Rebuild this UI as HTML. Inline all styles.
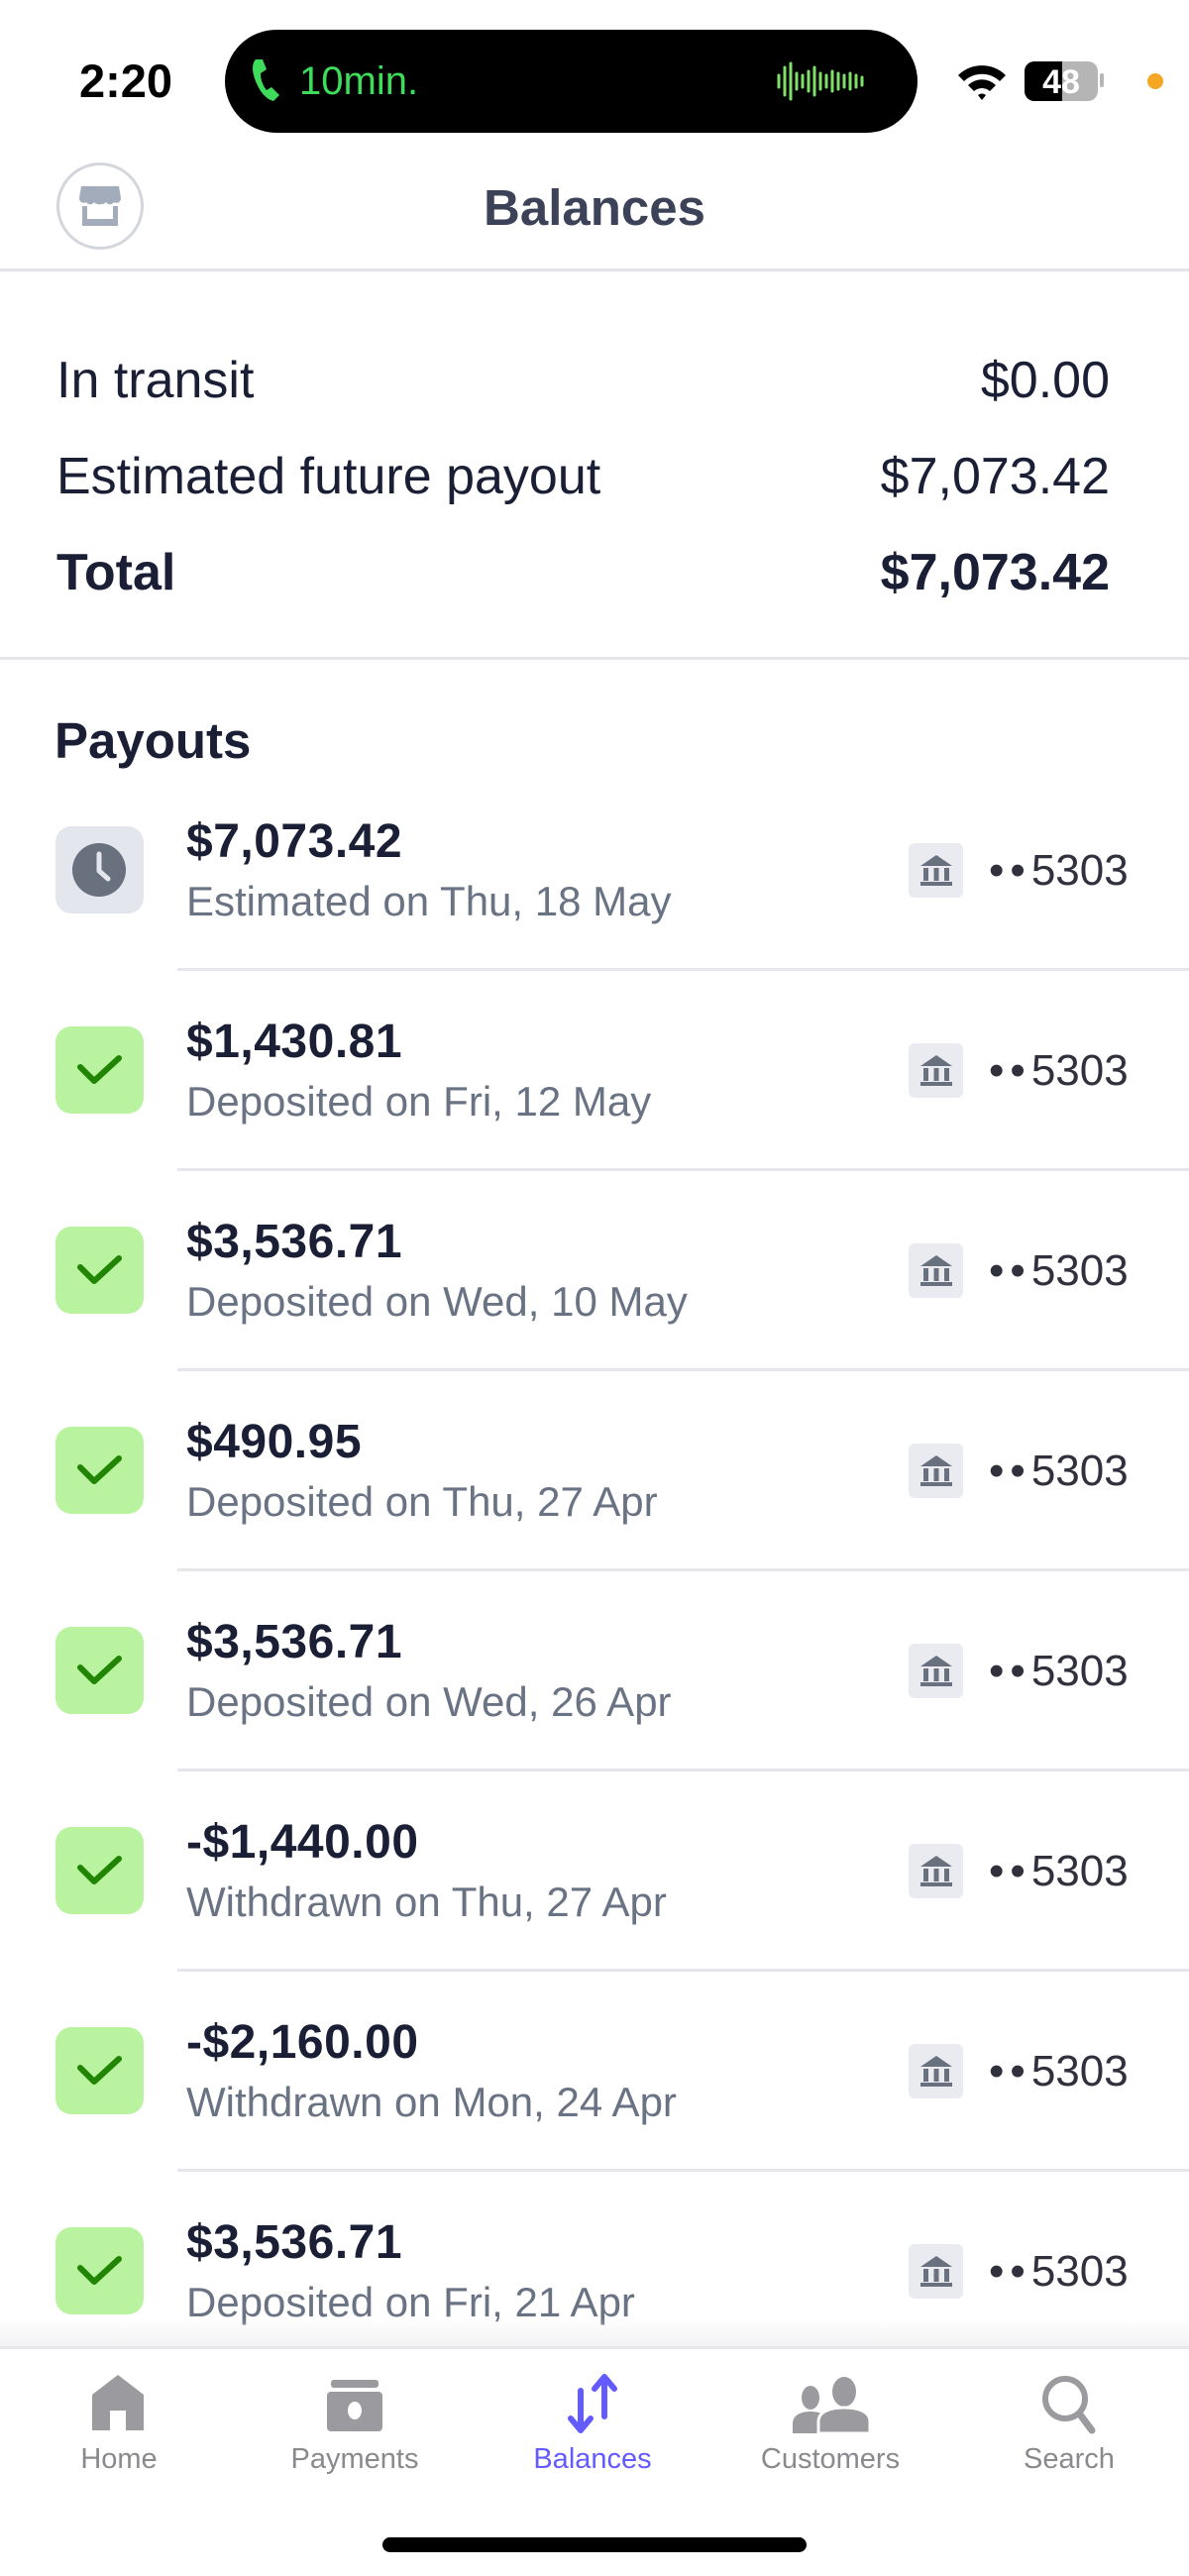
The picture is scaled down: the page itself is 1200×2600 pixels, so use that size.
<!DOCTYPE html>
<html><head><meta charset="utf-8"><style>
*{margin:0;padding:0;box-sizing:border-box}
body{width:1200px;height:2600px;background:#fff;position:relative;overflow:hidden;font-family:"Liberation Sans",sans-serif;color:#1a1f36}
.a{position:absolute}
.lbl{font-size:52px;color:#1a1f36;line-height:1}
.amt{font-size:48px;font-weight:bold;color:#1a1f36;line-height:1;letter-spacing:0.5px}
.sub{font-size:42px;color:#6a7383;line-height:1}
.ib{position:absolute;left:56px;width:89px;height:88px;border-radius:16px}
.bank{position:absolute;left:917px;width:55px;height:55px;background:#e9ebf1;border-radius:6px}
.acct{position:absolute;left:998px;font-size:44px;color:#30313d;line-height:1}
.acct b{font-weight:normal;letter-spacing:6px}
.sep{position:absolute;left:179px;right:0;height:3px;background:#e6e7eb}
.tab{position:absolute;top:2466px;width:240px;text-align:center;font-size:29px;color:#8a8a8e}
</style></head><body>
<div class="a" style="left:80px;top:54px;font-size:47px;font-weight:bold;color:#000">2:20</div>
<div class="a" style="left:227px;top:30px;width:699px;height:104px;background:#000;border-radius:52px"></div>
<svg class="a" style="left:252px;top:58px" width="34" height="46" viewBox="0 0 34 46"><path d="M6 2 C2 6 2 14 6 24 C10 34 16 42 24 44 L30 38 L22 30 L17 33 C13 28 11 22 11 16 L17 12 L13 2 Z" fill="#3ddc5a"/></svg>
<div class="a" style="left:302px;top:60px;font-size:40px;color:#3ddc5a">10min.</div>
<svg class="a" style="left:783px;top:62px" width="110" height="40"><g stroke="#7ee06a" stroke-width="3" stroke-linecap="round">
<line x1="3" y1="14" x2="3" y2="26"/><line x1="9" y1="6" x2="9" y2="34"/><line x1="15" y1="2" x2="15" y2="38"/><line x1="21" y1="12" x2="21" y2="28"/><line x1="27" y1="14" x2="27" y2="26"/><line x1="33" y1="10" x2="33" y2="30"/><line x1="39" y1="6" x2="39" y2="34"/><line x1="45" y1="12" x2="45" y2="28"/><line x1="51" y1="14" x2="51" y2="26"/><line x1="57" y1="10" x2="57" y2="30"/><line x1="63" y1="12" x2="63" y2="28"/><line x1="69" y1="14" x2="69" y2="26"/><line x1="75" y1="12" x2="75" y2="28"/><line x1="81" y1="14" x2="81" y2="26"/><line x1="87" y1="16" x2="87" y2="24"/></g></svg>
<svg class="a" style="left:965px;top:62px" width="52" height="40" viewBox="0 0 52 40"><path d="M2 14 A34 34 0 0 1 50 14 L44 20 A26 26 0 0 0 8 20 Z M12 24 A20 20 0 0 1 40 24 L34 30 A12 12 0 0 0 18 30 Z M22 34 A6 6 0 0 1 30 34 L26 39 Z" fill="#000"/></svg>
<div class="a" style="left:1034px;top:62px;width:74px;height:40px;border-radius:10px;background:#b5b5b5;overflow:hidden"><div style="width:38px;height:40px;background:#000"></div><div class="a" style="left:0;top:2px;width:74px;text-align:center;font-size:34px;font-weight:bold;color:#fff">48</div></div>
<div class="a" style="left:1110px;top:74px;width:4px;height:14px;background:#b5b5b5;border-radius:2px"></div>
<div class="a" style="left:1158px;top:74px;width:16px;height:16px;background:#f5a623;border-radius:50%"></div>
<div class="a" style="left:57px;top:164px;width:88px;height:88px;border:3px solid #d3d6dc;border-radius:50%"></div>
<svg class="a" style="left:76px;top:184px" width="50" height="50" viewBox="0 0 50 50"><path d="M6 4 H44 L46 16 C46 20 42 22 39 20 C37 23 33 23 31 20 C29 23 21 23 19 20 C17 23 13 23 11 20 C8 22 4 20 4 16 Z" fill="#a3acba"/><path d="M7 24 V44 H43 V24 H38 V37 H12 V24 Z" fill="#a3acba"/></svg>
<div class="a" style="left:0;top:180px;width:1200px;text-align:center;font-size:51px;font-weight:bold;color:#3c4257">Balances</div>
<div class="a" style="left:0;top:271px;width:1200px;height:3px;background:#e3e4e8"></div>
<div class="a lbl" style="left:57px;top:358px">In transit</div>
<div class="a lbl" style="right:80px;top:358px">$0.00</div>
<div class="a lbl" style="left:57px;top:455px">Estimated future payout</div>
<div class="a lbl" style="right:80px;top:455px">$7,073.42</div>
<div class="a lbl" style="left:57px;top:552px;font-weight:bold">Total</div>
<div class="a lbl" style="right:80px;top:552px;font-weight:bold">$7,073.42</div>
<div class="a" style="left:0;top:663px;width:1200px;height:3px;background:#e3e4e8"></div>
<div class="a" style="left:55px;top:718px;font-size:51px;font-weight:bold;color:#1a1f36">Payouts</div>

<div id="rows"></div>
<div class="ib" style="top:834px;background:#e3e6ec"></div>
<svg class="a" style="left:70px;top:848px" width="60" height="60" viewBox="0 0 60 60"><circle cx="30" cy="30" r="27" fill="#69707e"/><path d="M30 14 V31 L39 39" stroke="#e3e6ec" stroke-width="5" fill="none" stroke-linecap="round" stroke-linejoin="round"/></svg>
<div class="a amt" style="left:188px;top:826px">$7,073.42</div>
<div class="a sub" style="left:188px;top:889px">Estimated on Thu, 18 May</div>
<div class="bank" style="top:851px"></div>
<svg class="a" style="left:925px;top:859px" width="40" height="40" viewBox="0 0 40 40"><path d="M20 4 L36 15 H4 Z" fill="#69707e"/><rect x="7" y="17" width="5" height="13" fill="#69707e"/><rect x="17.5" y="17" width="5" height="13" fill="#69707e"/><rect x="28" y="17" width="5" height="13" fill="#69707e"/><rect x="4" y="31" width="32" height="4" fill="#69707e"/></svg>
<div class="acct" style="top:857px"><b>••</b>5303</div>
<div class="sep" style="top:977px"></div>

<script>
var d=[["$1,430.81","Deposited on Fri, 12 May"],["$3,536.71","Deposited on Wed, 10 May"],["$490.95","Deposited on Thu, 27 Apr"],["$3,536.71","Deposited on Wed, 26 Apr"],["-$1,440.00","Withdrawn on Thu, 27 Apr"],["-$2,160.00","Withdrawn on Mon, 24 Apr"],["$3,536.71","Deposited on Fri, 21 Apr"]];
var h="";
for(var i=0;i<d.length;i++){var o=202*(i+1);
h+='<div class="ib" style="top:'+(834+o)+'px;background:#b9f3a0"></div>';
h+='<svg class="a" style="left:70px;top:'+(848+o)+'px" width="60" height="60" viewBox="0 0 60 60"><path d="M11 27 L25 41 L50 18" stroke="#228403" stroke-width="6" fill="none" stroke-linecap="round" stroke-linejoin="round"/></svg>';
h+='<div class="a amt" style="left:188px;top:'+(826+o)+'px">'+d[i][0]+'</div>';
h+='<div class="a sub" style="left:188px;top:'+(889+o)+'px">'+d[i][1]+'</div>';
h+='<div class="bank" style="top:'+(851+o)+'px"></div>';
h+='<svg class="a" style="left:925px;top:'+(859+o)+'px" width="40" height="40" viewBox="0 0 40 40"><path d="M20 4 L36 15 H4 Z" fill="#69707e"/><rect x="7" y="17" width="5" height="13" fill="#69707e"/><rect x="17.5" y="17" width="5" height="13" fill="#69707e"/><rect x="28" y="17" width="5" height="13" fill="#69707e"/><rect x="4" y="31" width="32" height="4" fill="#69707e"/></svg>';
h+='<div class="acct" style="top:'+(857+o)+'px"><b>••</b>5303</div>';
if(i<d.length-1)h+='<div class="sep" style="top:'+(977+o)+'px"></div>';}
document.getElementById("rows").outerHTML=h;
</script>

<div class="a" style="left:0;top:2340px;width:1200px;height:30px;background:linear-gradient(rgba(255,255,255,0),rgba(240,240,242,0.9))"></div>
<div class="a" style="left:0;top:2368px;width:1200px;height:232px;background:#fff;border-top:3px solid #e6e7ea"></div>
<svg class="a" style="left:89px;top:2395px" width="60" height="60" viewBox="0 0 60 60"><path d="M30 2 L56 22 V58 H38 V38 H22 V58 H4 V22 Z" fill="#9b9b9f"/></svg>
<svg class="a" style="left:328px;top:2398px" width="60" height="56" viewBox="0 0 60 56"><rect x="6" y="4" width="48" height="8" rx="3" fill="#9b9b9f"/><rect x="2" y="16" width="56" height="40" rx="4" fill="#9b9b9f"/><ellipse cx="30" cy="35" rx="7" ry="9" fill="#fff"/></svg>
<svg class="a" style="left:568px;top:2395px" width="60" height="62" viewBox="0 0 60 62"><path d="M18 18 V58 M8 46 L18 58 L28 46 M42 44 V4 M32 16 L42 4 L52 16" stroke="#635bff" stroke-width="6" fill="none" stroke-linecap="round" stroke-linejoin="round"/></svg>
<svg class="a" style="left:798px;top:2398px" width="84" height="60" viewBox="0 0 84 60"><ellipse cx="20" cy="22" rx="9" ry="12" fill="#9b9b9f"/><path d="M2 58 V48 C2 40 10 36 20 36 C30 36 38 40 38 48 V58 Z" fill="#9b9b9f"/><ellipse cx="54" cy="16" rx="12" ry="15" fill="#9b9b9f"/><path d="M28 58 V46 C28 36 40 32 54 32 C68 32 80 36 80 46 V58 Z" fill="#9b9b9f" stroke="#fff" stroke-width="3"/></svg>
<svg class="a" style="left:1048px;top:2395px" width="62" height="62" viewBox="0 0 62 62"><circle cx="27" cy="26" r="20" stroke="#9b9b9f" stroke-width="6" fill="none"/><path d="M42 42 L54 58" stroke="#9b9b9f" stroke-width="7" stroke-linecap="round"/></svg>
<div class="tab" style="left:0">Home</div>
<div class="tab" style="left:238px">Payments</div>
<div class="tab" style="left:478px;color:#635bff">Balances</div>
<div class="tab" style="left:718px">Customers</div>
<div class="tab" style="left:959px">Search</div>
<div class="a" style="left:386px;top:2561px;width:428px;height:15px;background:#000;border-radius:8px"></div>
</body></html>
